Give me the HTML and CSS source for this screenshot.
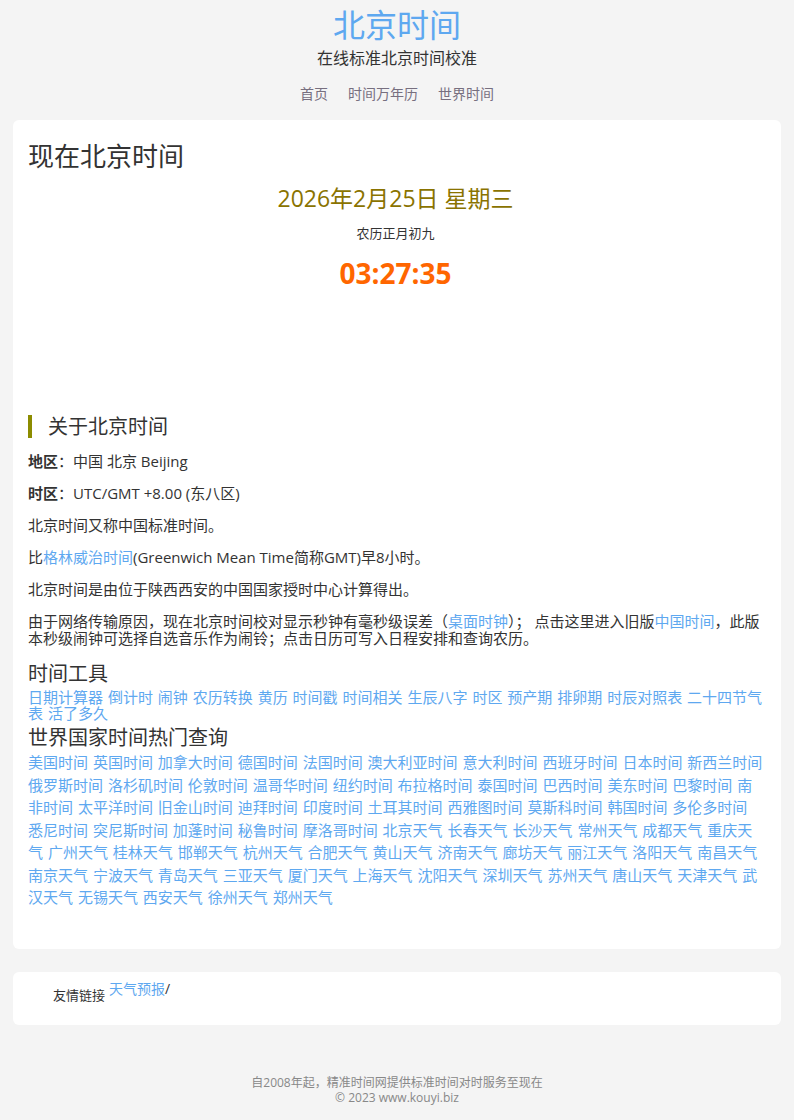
FILE: index.html
```html
<!DOCTYPE html>
<html lang="zh-CN">
<head>
<meta charset="utf-8">
<title>北京时间</title>
<link rel="stylesheet" href="styles.css">
</head>
<body>
<header class="site-header">
  <h1 class="site-title">北京时间</h1>
  <div class="site-sub">在线标准北京时间校准</div>
  <nav class="nav">
    <a href="#">首页</a>
    <a href="#">时间万年历</a>
    <a href="#">世界时间</a>
  </nav>
</header>

<main class="card main-card">
  <h2 class="now-title">现在北京时间</h2>
  <div class="date">2026年2月25日 星期三</div>
  <div class="lunar">农历正月初九</div>
  <div class="clock">03:27:35</div>
  <div class="ad-space"></div>

  <h3 class="about-title">关于北京时间</h3>
  <p><b>地区</b>：中国 北京 Beijing</p>
  <p><b>时区</b>：UTC/GMT +8.00 (东八区)</p>
  <p>北京时间又称中国标准时间。</p>
  <p>比<a href="#">格林威治时间</a>(Greenwich Mean Time简称GMT)早8小时。</p>
  <p>北京时间是由位于陕西西安的中国国家授时中心计算得出。</p>
  <p>由于网络传输原因，现在北京时间校对显示秒钟有毫秒级误差（<a href="#">桌面时钟</a>）； 点击这里进入旧版<a href="#">中国时间</a>，此版本秒级闹钟可选择自选音乐作为闹铃；点击日历可写入日程安排和查询农历。</p>

  <h3 class="sec-title">时间工具</h3>
  <div class="links tools">
    <a href="#">日期计算器</a> <a href="#">倒计时</a> <a href="#">闹钟</a> <a href="#">农历转换</a> <a href="#">黄历</a> <a href="#">时间戳</a> <a href="#">时间相关</a> <a href="#">生辰八字</a> <a href="#">时区</a> <a href="#">预产期</a> <a href="#">排卵期</a> <a href="#">时辰对照表</a> <a href="#">二十四节气表</a> <a href="#">活了多久</a>
  </div>

  <h3 class="sec-title world-title">世界国家时间热门查询</h3>
  <div class="links world">
    <a href="#">美国时间</a> <a href="#">英国时间</a> <a href="#">加拿大时间</a> <a href="#">德国时间</a> <a href="#">法国时间</a> <a href="#">澳大利亚时间</a> <a href="#">意大利时间</a> <a href="#">西班牙时间</a> <a href="#">日本时间</a> <a href="#">新西兰时间</a> <a href="#">俄罗斯时间</a> <a href="#">洛杉矶时间</a> <a href="#">伦敦时间</a> <a href="#">温哥华时间</a> <a href="#">纽约时间</a> <a href="#">布拉格时间</a> <a href="#">泰国时间</a> <a href="#">巴西时间</a> <a href="#">美东时间</a> <a href="#">巴黎时间</a> <a href="#">南非时间</a> <a href="#">太平洋时间</a> <a href="#">旧金山时间</a> <a href="#">迪拜时间</a> <a href="#">印度时间</a> <a href="#">土耳其时间</a> <a href="#">西雅图时间</a> <a href="#">莫斯科时间</a> <a href="#">韩国时间</a> <a href="#">多伦多时间</a> <a href="#">悉尼时间</a> <a href="#">突尼斯时间</a> <a href="#">加蓬时间</a> <a href="#">秘鲁时间</a> <a href="#">摩洛哥时间</a> <a href="#">北京天气</a> <a href="#">长春天气</a> <a href="#">长沙天气</a> <a href="#">常州天气</a> <a href="#">成都天气</a> <a href="#">重庆天气</a> <a href="#">广州天气</a> <a href="#">桂林天气</a> <a href="#">邯郸天气</a> <a href="#">杭州天气</a> <a href="#">合肥天气</a> <a href="#">黄山天气</a> <a href="#">济南天气</a> <a href="#">廊坊天气</a> <a href="#">丽江天气</a> <a href="#">洛阳天气</a> <a href="#">南昌天气</a> <a href="#">南京天气</a> <a href="#">宁波天气</a> <a href="#">青岛天气</a> <a href="#">三亚天气</a> <a href="#">厦门天气</a> <a href="#">上海天气</a> <a href="#">沈阳天气</a> <a href="#">深圳天气</a> <a href="#">苏州天气</a> <a href="#">唐山天气</a> <a href="#">天津天气</a> <a href="#">武汉天气</a> <a href="#">无锡天气</a> <a href="#">西安天气</a> <a href="#">徐州天气</a> <a href="#">郑州天气</a>
  </div>
</main>

<section class="card friends">
  <span class="friends-label">友情链接</span>
  <span class="friends-links"><a href="#">天气预报</a>/</span>
</section>

<footer class="site-footer">
  <div>自2008年起，精准时间网提供标准时间对时服务至现在</div>
  <div>© 2023 www.kouyi.biz</div>
</footer>
</body>
</html>
```

FILE: styles.css
```css
* { box-sizing: border-box; }

body {
  margin: 0;
  background: #f4f4f4;
  color: #333;
  font-family: "Open Sans", "Noto Sans CJK SC", sans-serif;
}

a { color: #5ea8f0; text-decoration: none; }

.site-header {
  text-align: center;
  padding-top: 8px;
}

.site-title {
  margin: 0;
  font-size: 32px;
  line-height: 34px;
  font-weight: normal;
  color: #5ea8f0;
}

.site-sub {
  margin-top: 6px;
  font-size: 16px;
  line-height: 20px;
  color: #333;
}

.nav {
  margin-top: 16px;
  display: flex;
  justify-content: center;
  gap: 20px;
  font-size: 14px;
  line-height: 20px;
}

.nav a { color: #776f7f; }

.card {
  background: #fff;
  border-radius: 6px;
  margin: 0 13px;
}

.main-card {
  margin-top: 16px;
  padding: 20px 18px 40px 15px;
}

.now-title {
  margin: 0;
  font-size: 26px;
  line-height: 32px;
  font-weight: normal;
  color: #333;
}

.date {
  margin-top: 11px;
  text-align: center;
  font-size: 23px;
  line-height: 30px;
  color: #8a7300;
}

.lunar {
  margin-top: 11px;
  text-align: center;
  font-size: 13px;
  line-height: 18px;
  color: #333;
}

.clock {
  margin-top: 14px;
  text-align: center;
  font-size: 28px;
  line-height: 34px;
  font-weight: bold;
  color: #ff6600;
}

.ad-space { height: 125px; }

.about-title {
  margin: 0;
  border-left: 4px solid #8c8c00;
  padding-left: 16px;
  font-size: 20px;
  line-height: 23px;
  font-weight: normal;
  color: #333;
}

.main-card p {
  margin: 15px 0;
  font-size: 15px;
  line-height: 17px;
}

.main-card p b { font-weight: bold; }

.sec-title {
  margin: 15px 0 3px;
  font-size: 20px;
  line-height: 24px;
  font-weight: normal;
  color: #333;
}

.world-title { margin-top: 5px; margin-bottom: 1px; }

.links { font-size: 15px; word-spacing: 1px; }

.tools { line-height: 16px; }

.world { line-height: 22.5px; }

.friends {
  margin-top: 23px;
  height: 53px;
  padding: 8px 15px 0 40px;
  display: flex;
  align-items: flex-start;
}

.friends-label {
  font-size: 13px;
  line-height: 18px;
  margin-top: 6px;
  color: #333;
}

.friends-links {
  font-size: 14px;
  line-height: 18px;
  margin-left: 4px;
  color: #333;
}

.site-footer {
  margin-top: 50px;
  text-align: center;
  font-size: 12px;
  line-height: 15px;
  color: #888;
}
```
